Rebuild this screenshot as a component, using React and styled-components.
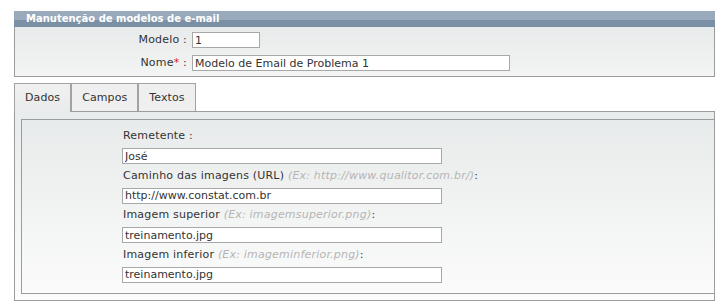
import React from "react";
import styled, { createGlobalStyle } from "styled-components";

const GlobalStyle = createGlobalStyle`
  body {
    margin: 0;
    background: #ffffff;
    font-family: "DejaVu Sans", Verdana, sans-serif;
    font-size: 11px;
    color: #333333;
  }
`;

const Page = styled.div`
  padding: 11px 6px 6px 14px;
`;

const Header = styled.div`
  height: 16px;
  line-height: 15px;
  padding-left: 12px;
  color: #ffffff;
  font-weight: bold;
  font-size: 10px;
  background: linear-gradient(#98aabb 0, #98aabb 9px, #7c90a5 9px, #7c90a5 100%);
`;

const FormBox = styled.div`
  border: 1px solid #9c9c9c;
  border-top: none;
  background: linear-gradient(#e8ebeb, #f3f4f4);
  padding: 5px 0 5px;
  display: grid;
  grid-template-columns: 172px auto;
  column-gap: 5px;
  row-gap: 7px;
  align-items: center;
`;

const RowLabel = styled.label`
  text-align: right;
  line-height: 16px;
  letter-spacing: 0.2px;
`;

const Req = styled.span`
  color: #d21f1f;
`;

const Input = styled.input`
  box-sizing: border-box;
  width: ${(p) => p.$w || 320}px;
  height: 16px;
  margin: 0;
  padding: 0 2px;
  border: 1px solid #a8a8a8;
  background: #ffffff;
  font-family: "DejaVu Sans", Verdana, sans-serif;
  font-size: 11px;
  color: #333333;
  outline: none;
`;

const TabBar = styled.div`
  display: flex;
  margin-top: 6px;
  align-items: flex-end;
`;

const Tab = styled.div`
  position: relative;
  z-index: 1;
  box-sizing: border-box;
  height: ${(p) => (p.$active ? 29 : 28)}px;
  margin-bottom: ${(p) => (p.$active ? -1 : 0)}px;
  padding: 0 10px ${(p) => (p.$active ? 1 : 0)}px;
  border: 1px solid #a2a2a2;
  border-bottom: none;
  line-height: 27px;
  letter-spacing: 0.1px;
  color: #333333;
  background: ${(p) =>
    p.$active ? "linear-gradient(#f0f0f0, #e9ecec)" : "#efefef"};
`;

const Panel = styled.div`
  border: 1px solid #9c9c9c;
  background: linear-gradient(#e9ecec, #fcfcfc);
  padding: 7px 0 6px 6px;
`;

const Inner = styled.div`
  border: 1px solid #9c9c9c;
  border-right: none;
  background: linear-gradient(#e8ebeb, #fbfbfb);
  padding: 8px 0 10px 100px;
  display: flex;
  flex-direction: column;
  gap: 3.5px;
`;

const Field = styled.div`
  display: flex;
  flex-direction: column;
  gap: 4px;
`;

const FieldLabel = styled.label`
  line-height: 16px;
  padding-left: 1px;
  letter-spacing: 0.2px;
`;

const Hint = styled.em`
  color: #b5b5b5;
`;

const fields = [
  { label: "Remetente :", value: "José" },
  {
    label: "Caminho das imagens (URL)",
    hint: "(Ex: http://www.qualitor.com.br/)",
    value: "http://www.constat.com.br",
  },
  {
    label: "Imagem superior",
    hint: "(Ex: imagemsuperior.png)",
    value: "treinamento.jpg",
  },
  {
    label: "Imagem inferior",
    hint: "(Ex: imageminferior.png)",
    value: "treinamento.jpg",
  },
];

export default function App() {
  return (
    <>
      <GlobalStyle />
      <Page>
        <Header>Manutenção de modelos de e-mail</Header>
        <FormBox>
          <RowLabel>Modelo :</RowLabel>
          <Input $w={68} defaultValue="1" />
          <RowLabel>
            Nome<Req>*</Req> :
          </RowLabel>
          <Input $w={318} defaultValue="Modelo de Email de Problema 1" />
        </FormBox>

        <TabBar>
          <Tab $active>Dados</Tab>
          <Tab>Campos</Tab>
          <Tab>Textos</Tab>
        </TabBar>
        <Panel>
          <Inner>
            {fields.map((f) => (
              <Field key={f.label}>
                <FieldLabel>
                  {f.label}
                  {f.hint && (
                    <>
                      {" "}
                      <Hint>{f.hint}</Hint>:
                    </>
                  )}
                </FieldLabel>
                <Input defaultValue={f.value} />
              </Field>
            ))}
          </Inner>
        </Panel>
      </Page>
    </>
  );
}
